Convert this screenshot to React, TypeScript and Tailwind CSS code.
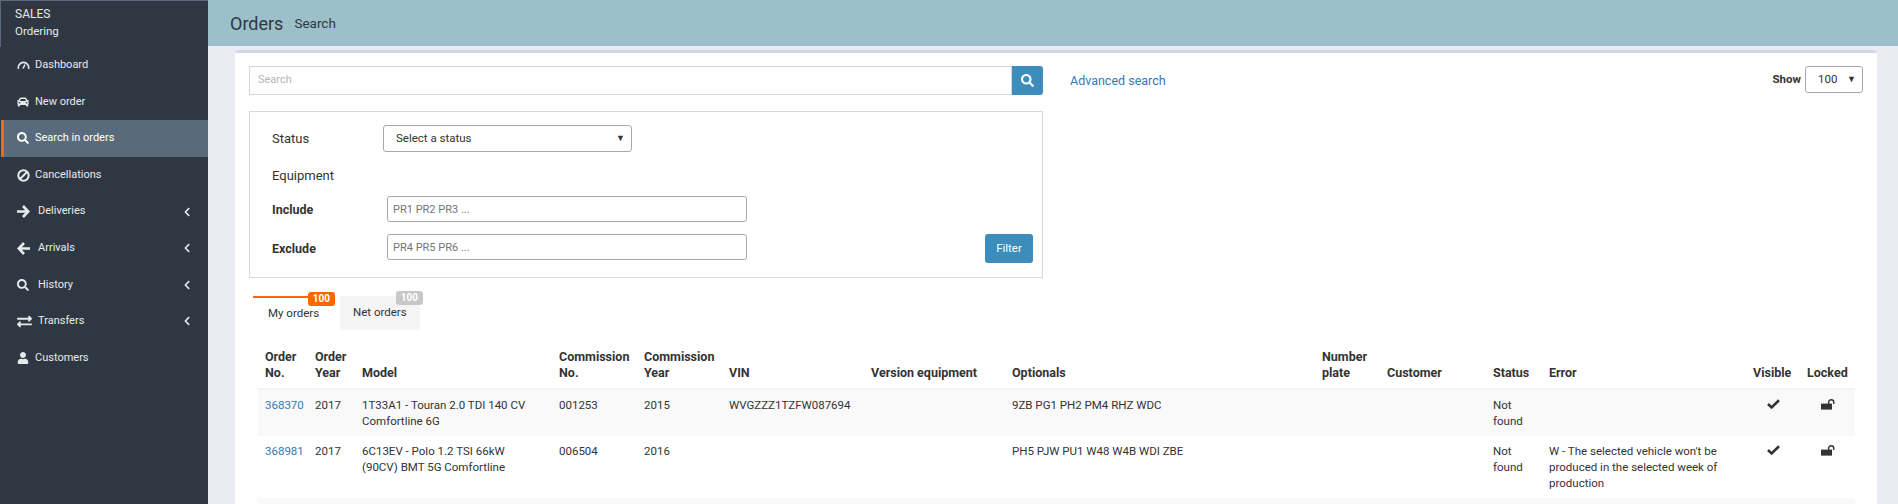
import React from "react";
import { FaCar, FaChevronLeft, FaExchangeAlt, FaSearch, FaUser } from "react-icons/fa";

// glyphicon style drawings the icon packages don't match closely
const GaugeIcon = () => (
  <svg width="13" height="10" viewBox="0 0 13 10" fill="none" stroke="currentColor">
    <path d="M1.5 9 A5.2 5.2 0 1 1 11.5 9" strokeWidth="1.6" />
    <path d="M6 8.5 L8 4.5" strokeWidth="1.6" />
  </svg>
);

const BanIcon = () => (
  <svg width="13" height="13" viewBox="0 0 13 13" fill="none" stroke="currentColor" strokeWidth="2">
    <circle cx="6.5" cy="6.5" r="5.2" />
    <path d="M3 10 L10 3" />
  </svg>
);

const ArrowIcon = ({ left }: { left?: boolean }) => (
  <svg width="13" height="13" viewBox="0 0 13 13" fill="none" stroke="currentColor" strokeWidth="2.6">
    {left ? <path d="M13 6.5 H2 M7 1 L1.8 6.5 L7 12" /> : <path d="M0 6.5 H11 M6 1 L11.2 6.5 L6 12" />}
  </svg>
);

const CheckIcon = () => (
  <svg width="13" height="10" viewBox="0 0 13 10" fill="none" stroke="currentColor" strokeWidth="2.6" className="mx-auto mt-[2px]">
    <path d="M1 5 L4.6 8.4 L12 1.2" />
  </svg>
);

const UnlockIcon = () => (
  <svg width="14" height="11" viewBox="0 0 14 11" className="mx-auto mt-[2px]">
    <rect x="0" y="4.6" width="11" height="6" fill="currentColor" />
    <path d="M7.6 5 V3.4 A2.6 2.6 0 0 1 12.8 3.4 V5" fill="none" stroke="currentColor" strokeWidth="1.4" />
  </svg>
);

const navItems = [
  { label: "Dashboard", icon: <GaugeIcon /> },
  { label: "New order", icon: <FaCar size={12} /> },
  { label: "Search in orders", icon: <FaSearch size={12} />, active: true },
  { label: "Cancellations", icon: <BanIcon /> },
  { label: "Deliveries", icon: <ArrowIcon />, sub: true },
  { label: "Arrivals", icon: <ArrowIcon left />, sub: true },
  { label: "History", icon: <FaSearch size={12} />, sub: true },
  { label: "Transfers", icon: <FaExchangeAlt size={15} />, sub: true },
  { label: "Customers", icon: <FaUser size={12} /> },
];

const Sidebar = () => (
  <aside className="w-[208px] shrink-0 bg-[#2f3842] text-[#e6e9ec]">
    <div className="h-[47px] border-t border-l border-[#5a6a7d] pl-[14px] pt-[5px] text-[12px] leading-[17px]">
      <div>SALES</div>
      <div className="text-[11.5px]">Ordering</div>
    </div>
    <nav>
      {navItems.map((item) => (
        <div
          key={item.label}
          className={
            item.active
              ? "ml-px flex h-[36.6px] items-center border-l-[3px] border-[#f26a0f] bg-[#5a6a7d] pl-[13px] pr-[16px] text-white"
              : "flex h-[36.6px] items-center pl-[17px] pr-[16px]"
          }
        >
          <span className="flex w-[18px] justify-start">{item.icon}</span>
          <span className={item.sub ? "ml-[3px] text-[11px]" : "text-[11px]"}>{item.label}</span>
          {item.sub && <FaChevronLeft size={10} className="ml-auto" />}
        </div>
      ))}
    </nav>
  </aside>
);

const FilterBox = () => (
  <div className="mt-4 h-[167px] w-[794px] border border-[#d5d8dc] pl-[22px] pr-[9px] pt-[13px]">
    <div className="flex items-center">
      <span className="w-[111px] text-[13px]">Status</span>
      <div className="flex h-[27px] w-[249px] items-center justify-between rounded-[3px] border border-[#a9a9a9] pl-[12px] pr-[6px] text-[11.5px]">
        Select a status
        <span className="text-[9px]">▼</span>
      </div>
    </div>
    <div className="mt-4 text-[13px] leading-[16px]">Equipment</div>
    <div className="mt-3 flex items-center">
      <span className="w-[115px] pt-[2px] text-[12.5px] font-bold">Include</span>
      <input
        placeholder="PR1 PR2 PR3 ..."
        className="h-[26px] w-[360px] rounded-[3px] border border-[#a9a9a9] px-[5px] text-[11px] placeholder:text-[#757575]"
      />
    </div>
    <div className="mt-3 flex items-start">
      <span className="w-[115px] text-[12.5px] leading-[30px] font-bold">Exclude</span>
      <input
        placeholder="PR4 PR5 PR6 ..."
        className="h-[26px] w-[360px] rounded-[3px] border border-[#a9a9a9] px-[5px] text-[11px] placeholder:text-[#757575]"
      />
      <button className="ml-auto h-[29px] w-[48px] rounded-[3px] bg-[#3c8dbc] text-[11.5px] text-white">Filter</button>
    </div>
  </div>
);

const Tabs = () => (
  <div className="mt-[18px] ml-1 flex text-[11.5px]">
    <div className="relative flex h-[34px] w-[82px] items-center border-t-2 border-[#ff6600] pl-[15px]">
      My orders
      <span className="absolute -top-[6px] right-0 rounded-[3px] bg-[#ff6600] px-[5px] text-[10px] leading-[14px] font-bold text-white">100</span>
    </div>
    <div className="relative ml-[5px] flex h-[34px] w-[80px] items-center bg-[#f5f5f5] pl-[13px]">
      Net orders
      <span className="absolute -top-[5px] -right-[3px] rounded-[3px] bg-[#c8c8c8] px-[5px] text-[10px] leading-[14px] font-bold text-white">100</span>
    </div>
  </div>
);

const headers: [string, string][] = [
  ["Order No.", "w-[50px]"],
  ["Order Year", "w-[47px]"],
  ["Model", "w-[197px]"],
  ["Commission No.", "w-[85px]"],
  ["Commission Year", "w-[85px]"],
  ["VIN", "w-[142px]"],
  ["Version equipment", "w-[141px]"],
  ["Optionals", "w-[310px]"],
  ["Number plate", "w-[65px]"],
  ["Customer", "w-[106px]"],
  ["Status", "w-[56px]"],
  ["Error", "w-[204px]"],
  ["Visible", "w-[54px]"],
  ["Locked", "w-[55px]"],
];

const rows = [
  {
    no: "368370",
    year: "2017",
    model: "1T33A1 - Touran 2.0 TDI 140 CV Comfortline 6G",
    commNo: "001253",
    commYear: "2015",
    vin: "WVGZZZ1TZFW087694",
    optionals: "9ZB PG1 PH2 PM4 RHZ WDC",
    error: "",
  },
  {
    no: "368981",
    year: "2017",
    model: "6C13EV - Polo 1.2 TSI 66kW (90CV) BMT 5G Comfortline",
    commNo: "006504",
    commYear: "2016",
    vin: "",
    optionals: "PH5 PJW PU1 W48 W4B WDI ZBE",
    error: "W - The selected vehicle won't be produced in the selected week of production",
  },
];

const cell = "px-[7px] py-[7px] align-top";

const OrdersTable = () => (
  <table className="mt-[19px] ml-[9px] w-[1597px] table-fixed border-collapse text-[11.5px] leading-[16px]">
    <thead>
      <tr>
        {headers.map(([label, width]) => (
          <th key={label} className={`${width} px-[7px] pb-[7px] text-left align-bottom text-[12.5px] font-bold whitespace-normal`}>
            {label}
          </th>
        ))}
      </tr>
    </thead>
    <tbody>
      {rows.map((row, i) => (
        <tr key={row.no} className={i === 0 ? "border-t-2 border-[#f3f3f3] bg-[#f9f9f9]" : ""}>
          <td className={`${cell} text-[#337ab7]`}>{row.no}</td>
          <td className={cell}>{row.year}</td>
          <td className="py-[7px] pr-[16px] pl-[7px] align-top">{row.model}</td>
          <td className={cell}>{row.commNo}</td>
          <td className={cell}>{row.commYear}</td>
          <td className={cell}>{row.vin}</td>
          <td className={cell}></td>
          <td className={cell}>{row.optionals}</td>
          <td className={cell}></td>
          <td className={cell}></td>
          <td className={cell}>Not found</td>
          <td className={cell}>{row.error}</td>
          <td className={cell}>
            <CheckIcon />
          </td>
          <td className={cell}>
            <UnlockIcon />
          </td>
        </tr>
      ))}
      <tr className="h-10 bg-[#f9f9f9]">
        <td colSpan={14}></td>
      </tr>
    </tbody>
  </table>
);

export default function App() {
  return (
    <div className="flex h-[504px] overflow-hidden bg-[#e9edf2] font-['Roboto',sans-serif] text-[#333]">
      <Sidebar />
      <main className="flex min-w-0 flex-1 flex-col">
        <header className="flex h-[46px] shrink-0 items-center bg-[#9cc0c9] pl-[22px] text-[#2f3842]">
          <span className="text-[18px]">Orders</span>
          <span className="ml-[11px] text-[13.5px]">Search</span>
        </header>
        <section className="mt-1 mr-[21px] ml-[27px] flex-1 rounded-t-[3px] border-t-[3px] border-[#d2d7e0] bg-white px-[14px] pt-[13px]">
          <div className="flex items-start">
            <div className="flex h-[29px] w-[794px]">
              <input
                placeholder="Search"
                className="min-w-0 flex-1 border border-[#d2d6de] px-2 text-[11px] placeholder:text-[#b5b5b5]"
              />
              <button className="flex w-[31px] items-center justify-center rounded-r-[3px] bg-[#3c8dbc] text-white">
                <FaSearch size={13} />
              </button>
            </div>
            <a className="mt-[6px] ml-[27px] text-[12.5px] text-[#337ab7]">Advanced search</a>
            <div className="ml-auto flex items-center">
              <span className="mr-[4px] text-[11.5px] font-bold">Show</span>
              <div className="flex h-[27px] w-[58px] items-center justify-between rounded-[3px] border border-[#a9a9a9] pl-[12px] pr-[6px] text-[11.5px]">
                100
                <span className="text-[9px]">▼</span>
              </div>
            </div>
          </div>
          <FilterBox />
          <Tabs />
          <OrdersTable />
        </section>
      </main>
    </div>
  );
}
